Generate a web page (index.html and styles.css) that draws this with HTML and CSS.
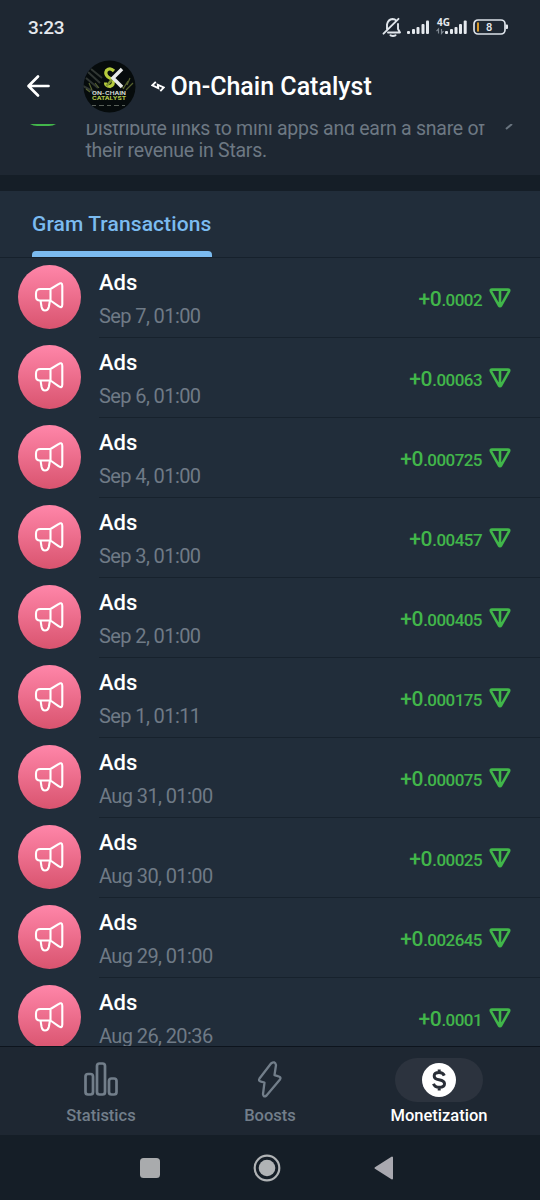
FILE: index.html
```html
<!DOCTYPE html>
<html lang="en">
<head>
<meta charset="utf-8">
<title>On-Chain Catalyst</title>
<link rel="stylesheet" href="styles.css">
</head>
<body>
<svg class="defs" width="0" height="0">
  <symbol id="horn" viewBox="0 0 30 30">
    <path d="M16.500 7H6.500Q2 7 2 11.500V14.500Q2 18.500 6 18.500H16.500L24.500 24.200C27 26 28.300 25 28.300 22.500V4C28.300 1 26.500 .5 24.500 2.200L16.500 7V18.500M6.500 18.500L7.500 24.500Q8.300 28.500 11 28.500Q14 28.500 14.800 25L16 18.500"/>
  </symbol>
  <symbol id="gram" viewBox="0 0 22 20">
    <path d="M3 1.600H19Q20.800 1.600 20 3.300L12.300 17.200Q11 19.200 9.700 17.200L2 3.300Q1.200 1.600 3 1.600ZM11 2V17"/>
  </symbol>
</svg>
<div class="phone">
  <header class="top">
    <div class="status">
      <span class="clock">3:23</span>
      <svg class="indicators" width="128" height="24" viewBox="0 0 128 24">
        <g fill="none" stroke="#e1e6ec" stroke-width="1.900" stroke-linecap="round" stroke-linejoin="round">
          <path d="M6 14V9.500Q7 4.500 11.500 4Q14 4 15 5.500M17 9V14L19 17.500H7M2.500 18.700L17.500 3.800"/>
          <path d="M9.500 20.300Q12 21.500 14.500 20.300" stroke-width="2"/>
        </g>
        <g fill="#e5e9ee">
          <rect x="26" y="16" width="3" height="3" rx="1"/><rect x="31" y="14" width="3" height="5" rx="1"/><rect x="35.500" y="12" width="3" height="7" rx="1"/><rect x="40.500" y="9" width="3" height="10" rx="1"/><rect x="45" y="5.500" width="3" height="13.500" rx="1"/>
          <rect x="64" y="16" width="3" height="3" rx="1"/><rect x="69" y="14" width="3" height="5" rx="1"/><rect x="73.500" y="12" width="3" height="7" rx="1"/><rect x="78" y="9" width="3" height="10" rx="1"/><rect x="82.700" y="5.500" width="3" height="13.500" rx="1"/>
          <rect x="124.500" y="9.500" width="2.500" height="4.500" rx="1"/>
        </g>
        <text class="network" x="56" y="11">4G</text>
        <path d="M57.500 18.500V14L55.500 16.200M60.500 14V18.500L62.500 16.200" stroke="#7e8791" stroke-width="1.200" fill="none"/>
        <rect x="93" y="5" width="31" height="14" rx="4" fill="none" stroke="#dce2e9" stroke-width="1.700"/>
        <rect x="96" y="7.300" width="2" height="9.500" rx="1" fill="#d99a2b"/>
        <text class="charge" x="105" y="16">8</text>
      </svg>
    </div>
    <div class="title-bar">
      <svg class="back" width="24" height="24" viewBox="0 0 24 24"><path d="M12 2.500L2.500 12L12 21.500M3 12H22.500"/></svg>
      <svg class="avatar" width="53" height="53" viewBox="0 0 53 53">
        <defs><clipPath id="round"><circle cx="26.500" cy="26.500" r="26"/></clipPath></defs>
        <g clip-path="url(#round)">
          <rect width="53" height="53" fill="#060b0c"/>
          <g fill="none">
            <path d="M5 12L17 23M3 18L15 28M8 9L19 18M0 26L13 33" stroke="#59615a" stroke-width="2" opacity=".5"/>
            <path d="M40 29L45 21M43 30L50 23M44 25L47 18M38 25L41 29M6 23L9 30M3 29L7 32M12 23L16 28" stroke="#78863d" stroke-width="1.200" opacity=".7"/>
            <path d="M31 11Q27 7 23.500 10.500Q21.500 14 25 17L30 20Q31.500 25 27 26.500Q22.500 26 22.500 22.500" stroke="#b7cc3d" stroke-width="3.200"/>
            <path d="M23.500 26L31 17" stroke="#7d9330" stroke-width="2.500"/>
            <path d="M39 9L30 18L39 27" stroke="#e7e9e9" stroke-width="3.500"/>
          </g>
        </g>
        <text x="9" y="35" textLength="34" lengthAdjust="spacingAndGlyphs" fill="#d1d8d2">ON-CHAIN</text>
        <text x="9" y="40" textLength="34" lengthAdjust="spacingAndGlyphs" fill="#b5c94a">CATALYST</text>
        <path d="M9 45.500h4m3 0h5m3 0h4m3 0h5m3 0h3" stroke="#596059" stroke-width="1.200"/>
      </svg>
      <h1><svg width="14" height="12" viewBox="0 0 14 12"><path d="M4.800 .8L1.300 4.300L7.300 7.200L6.800 3.800L12.800 6.500L9.300 10.200" fill="none" stroke="#fff" stroke-width="1.900"/></svg><span>On-Chain Catalyst</span></h1>
    </div>
  </header>

  <section class="program">
    <svg class="program-icon" width="28" height="3" viewBox="0 0 28 3"><path d="M1 0H27Q24 2 20 2H8Q4 2 1 0Z" fill="#43b64b"/></svg>
    <p>Distribute links to mini apps and earn a share of<br>their revenue in Stars.</p>
    <svg class="chevron" width="8" height="7" viewBox="0 0 8 7"><path d="M1 5L7 0" stroke="#69747f" stroke-width="2"/></svg>
  </section>

  <nav class="tabs"><div class="tab">Gram Transactions</div></nav>

  <main class="list">
    <article class="row"><div class="disc"><svg><use href="#horn"/></svg></div><div class="info"><div class="copy"><h2>Ads</h2><time>Sep 7, 01:00</time></div><div class="amount"><b>+0</b><span>.0002</span><svg><use href="#gram"/></svg></div></div></article>
    <article class="row"><div class="disc"><svg><use href="#horn"/></svg></div><div class="info"><div class="copy"><h2>Ads</h2><time>Sep 6, 01:00</time></div><div class="amount"><b>+0</b><span>.00063</span><svg><use href="#gram"/></svg></div></div></article>
    <article class="row"><div class="disc"><svg><use href="#horn"/></svg></div><div class="info"><div class="copy"><h2>Ads</h2><time>Sep 4, 01:00</time></div><div class="amount"><b>+0</b><span>.000725</span><svg><use href="#gram"/></svg></div></div></article>
    <article class="row"><div class="disc"><svg><use href="#horn"/></svg></div><div class="info"><div class="copy"><h2>Ads</h2><time>Sep 3, 01:00</time></div><div class="amount"><b>+0</b><span>.00457</span><svg><use href="#gram"/></svg></div></div></article>
    <article class="row"><div class="disc"><svg><use href="#horn"/></svg></div><div class="info"><div class="copy"><h2>Ads</h2><time>Sep 2, 01:00</time></div><div class="amount"><b>+0</b><span>.000405</span><svg><use href="#gram"/></svg></div></div></article>
    <article class="row"><div class="disc"><svg><use href="#horn"/></svg></div><div class="info"><div class="copy"><h2>Ads</h2><time>Sep 1, 01:11</time></div><div class="amount"><b>+0</b><span>.000175</span><svg><use href="#gram"/></svg></div></div></article>
    <article class="row"><div class="disc"><svg><use href="#horn"/></svg></div><div class="info"><div class="copy"><h2>Ads</h2><time>Aug 31, 01:00</time></div><div class="amount"><b>+0</b><span>.000075</span><svg><use href="#gram"/></svg></div></div></article>
    <article class="row"><div class="disc"><svg><use href="#horn"/></svg></div><div class="info"><div class="copy"><h2>Ads</h2><time>Aug 30, 01:00</time></div><div class="amount"><b>+0</b><span>.00025</span><svg><use href="#gram"/></svg></div></div></article>
    <article class="row"><div class="disc"><svg><use href="#horn"/></svg></div><div class="info"><div class="copy"><h2>Ads</h2><time>Aug 29, 01:00</time></div><div class="amount"><b>+0</b><span>.002645</span><svg><use href="#gram"/></svg></div></div></article>
    <article class="row"><div class="disc"><svg><use href="#horn"/></svg></div><div class="info"><div class="copy"><h2>Ads</h2><time>Aug 26, 20:36</time></div><div class="amount"><b>+0</b><span>.0001</span><svg><use href="#gram"/></svg></div></div></article>
  </main>

  <nav class="bottom">
    <div class="item"><div class="pill"><svg width="36" height="36" viewBox="0 0 36 36"><g fill="none" stroke="#727e8a" stroke-width="2.700"><rect x="2.500" y="12" width="7.500" height="20.500" rx="2.500"/><rect x="14" y="1.500" width="8" height="31" rx="2.500"/><rect x="26" y="16.500" width="7.500" height="16" rx="2.500"/></g></svg></div><span>Statistics</span></div>
    <div class="item"><div class="pill"><svg width="36" height="40" viewBox="0 0 36 40"><path d="M19 3.500L7.500 18.500Q6 21 9 21.700L12.500 22.500L11 34Q11.500 38 14.500 35.500L28 19.500Q29.500 17 26.500 16.300L22.500 15.200L24 5Q23 .5 19 3.500Z" fill="none" stroke="#727e8a" stroke-width="2.300" stroke-linejoin="round"/></svg></div><span>Boosts</span></div>
    <div class="item active"><div class="pill"><svg width="34" height="34" viewBox="0 0 34 34"><circle cx="17" cy="17" r="17" fill="#fff"/><path d="M22.300 12.700Q21 9.600 17 9.600Q12.200 9.600 12.200 13Q12.200 16 17 16.700Q22.500 17.500 22.500 20.800Q22.500 24.300 17.300 24.300Q12.800 24.300 11.500 20.700M17.200 6.500V10M17.200 24V27.500" fill="none" stroke="#292e37" stroke-width="3"/></svg></div><span>Monetization</span></div>
  </nav>
  <footer class="system">
    <svg width="20" height="20"><rect width="20" height="20" rx="3.500" fill="#a9abad"/></svg>
    <svg width="28" height="28"><circle cx="14" cy="14" r="12.300" fill="none" stroke="#b0b3b5" stroke-width="2.200"/><circle cx="14" cy="14" r="8.300" fill="#b0b3b5"/></svg>
    <svg width="20" height="24"><path d="M18 1.500V22.500L1.500 12Z" fill="#a9a9b0" stroke="#a9a9b0" stroke-width="2" stroke-linejoin="round"/></svg>
  </footer>
</div>
</body>
</html>
```
FILE: styles.css
```css
* { box-sizing: border-box; }
body { margin: 0; background: #151e27; font-family: Roboto, "Noto Sans", sans-serif; }
h1, h2, p { margin: 0; }
svg { display: block; flex: none; }
.defs { position: absolute; }
.phone { width: 540px; height: 1200px; display: flex; flex-direction: column; overflow: hidden; }
.top { height: 124px; flex: none; background: #1e2732; }
.status { height: 48px; display: flex; justify-content: space-between; padding: 15px 31px 0 28px; }
.clock { color: #e5e9ee; font-size: 19px; line-height: 25px; font-weight: 500; letter-spacing: -.3px; }
.network { font: bold 10px "Noto Sans", sans-serif; }
.indicators text { fill: #e5e9ee; }
.charge { font: 500 11px Roboto, sans-serif; }
.title-bar { height: 76px; display: flex; align-items: center; padding-left: 26px; }
.back { fill: none; stroke: #fff; stroke-width: 2.7; stroke-linecap: round; stroke-linejoin: round; }
.avatar { margin-left: 32.5px; font: bold 5px Inter, sans-serif; }
.title-bar h1 { display: flex; align-items: center; gap: 6px; margin: 2px 0 0 15px; color: #fff; font-size: 25px; line-height: 30px; font-weight: 500; }
.program { height: 51px; flex: none; display: flex; overflow: hidden; background: #1e2732; color: #6d7883; padding-left: 29px; }
.program p { width: 418px; margin: -6px 0 0 28.5px; font-size: 19.5px; line-height: 22px; letter-spacing: -.26px; white-space: nowrap; }
.chevron { margin-left: 1px; }
.tabs { height: 67px; flex: none; margin-top: 16px; padding-left: 32px; display: flex; background: #212d3a; border-bottom: 1px solid #16212c; }
.tab { width: 180px; padding-top: 20px; font-size: 21px; line-height: 26px; font-weight: 500; letter-spacing: .1px; color: #7bbbf0; white-space: nowrap; display: flex; flex-direction: column; justify-content: space-between; }
.tab::after { content: ""; height: 6px; border-radius: 4px 4px 0 0; background: #7bbbf0; }
.list { height: 788px; flex: none; overflow: hidden; background: #212d3a; }
.row { height: 80px; display: flex; padding-left: 18px; }
.disc { width: 63px; height: 64px; margin-top: 7px; border-radius: 50%; background: linear-gradient(#ff86a9, #d9546f); display: grid; place-items: center; flex: none; }
.disc svg { width: 30px; height: 30px; margin-right: 1px; fill: none; stroke: #fff; stroke-width: 2.1; stroke-linejoin: round; }
.info { flex: 1; margin-left: 18px; padding-right: 29px; display: flex; justify-content: space-between; border-bottom: 1px solid #17222d; }
.copy h2 { margin-top: 11px; font-size: 22px; line-height: 28px; font-weight: 500; color: #fff; }
.copy time { display: block; margin-top: 5px; font-size: 20px; line-height: 28px; letter-spacing: -.6px; color: #6f7a86; }
.amount { display: flex; align-items: baseline; margin-top: 27px; height: 28px; color: #41b64a; font-weight: 500; line-height: 28px; }
.amount b { font-size: 21px; font-weight: 500; letter-spacing: -.3px; }
.amount span { font-size: 17px; letter-spacing: -.55px; }
.amount svg { align-self: flex-start; width: 22px; height: 20px; margin: 3px 0 0 7px; fill: none; stroke: #41b64a; stroke-width: 2.6; stroke-linejoin: round; }
.bottom { height: 89px; flex: none; display: flex; justify-content: center; padding: 11px 16px 0; background: #1e2732; border-top: 1px solid #0d141d; }
.item { width: 169px; flex: none; display: flex; flex-direction: column; align-items: center; color: #727e8a; font-size: 16.5px; font-weight: 500; line-height: 24px; }
.pill { width: 88px; height: 44px; display: grid; place-items: center; border-radius: 22px; }
.item span { margin-top: 2px; }
.active { color: #fff; }
.active .pill { background: #2c333e; }
.system { height: 65px; flex: none; display: flex; align-items: center; padding-left: 140px; background: #151e27; }
.system svg:nth-child(2) { margin-left: 93px; }
.system svg:nth-child(3) { margin-left: 93px; }
```
